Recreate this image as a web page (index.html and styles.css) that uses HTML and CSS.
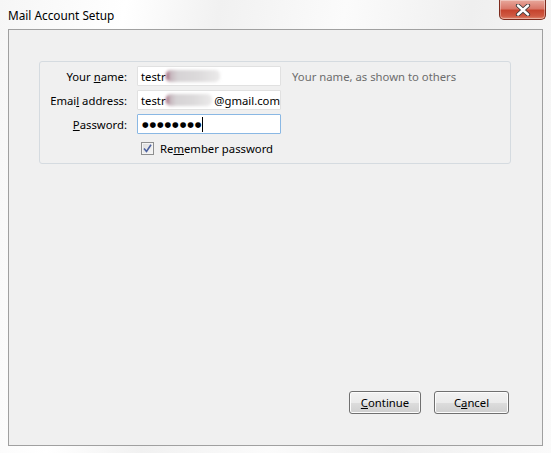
FILE: index.html
```html
<!DOCTYPE html>
<html>
<head>
<meta charset="utf-8">
<link rel="stylesheet" href="styles.css">
</head>
<body>
<div class="window">
  <div class="titlebar">
    <span class="title">Mail Account Setup</span>
    <div class="close">
      <svg width="22" height="12" viewBox="0 0 22 12">
        <path d="M6 1.5 L16 10.5 M16 1.5 L6 10.5" stroke="#3a3a3a" stroke-width="4.2" stroke-linecap="round"/>
        <path d="M6 1.5 L16 10.5 M16 1.5 L6 10.5" stroke="#ffffff" stroke-width="2.4" stroke-linecap="round"/>
      </svg>
    </div>
  </div>
  <div class="panel">
    <div class="group">
      <label class="lbl">Your <u>n</u>ame:</label>
      <div class="field"><span>testr</span><span class="blur w56"></span></div>
      <span class="hint">Your name, as shown to others</span>

      <label class="lbl">Emai<u>l</u> address:</label>
      <div class="field"><span>testr</span><span class="blur w51"></span><span>@gmail.com</span></div>
      <span></span>

      <label class="lbl"><u>P</u>assword:</label>
      <div class="field focus"><span class="dots">●●●●●●●●</span><span class="caret"></span></div>
      <span></span>

      <span></span>
      <div class="check">
        <span class="box">
          <svg width="9" height="9" viewBox="0 0 9 9"><path d="M1 4.5 L3.5 7.5 L8 0.8" fill="none" stroke="#4d62a0" stroke-width="1.6"/></svg>
        </span>
        <span>Re<u>m</u>ember password</span>
      </div>
      <span></span>
    </div>
    <div class="buttons">
      <button class="btn cont"><u>C</u>ontinue</button>
      <button class="btn canc">C<u>a</u>ncel</button>
    </div>
  </div>
</div>
</body>
</html>
```

FILE: styles.css
```css
* { box-sizing: border-box; }
html, body { margin: 0; padding: 0; }
body {
  width: 551px;
  height: 453px;
  overflow: hidden;
  font-family: "Noto Sans", "Open Sans", sans-serif;
  font-size: 11.3px;
  color: #000;
  background: linear-gradient(100deg, #f6f6f6 0%, #ffffff 20%, #f1f1f1 35%, #fbfbfb 55%, #efefef 75%, #fafafa 100%);
}
.window {
  width: 551px;
  height: 453px;
  display: flex;
  flex-direction: column;
  padding: 0 8px 7px 8px;
}
.titlebar {
  height: 29px;
  flex: none;
  display: flex;
  align-items: flex-start;
  justify-content: space-between;
  margin-right: -3px;
}
.title {
  font-size: 11.8px;
  line-height: 14px;
  padding-top: 8px;
  color: #000;
}
.close {
  width: 47px;
  height: 20px;
  border: 1px solid #7c2b1d;
  border-top: none;
  border-radius: 0 0 5px 5px;
  background: linear-gradient(#e8a89c 0%, #d9786a 45%, #c6442e 55%, #cf5a43 85%, #e08a72 100%);
  box-shadow: inset 0 0 0 1px rgba(255,255,255,0.35);
  display: flex;
  align-items: center;
  justify-content: center;
}
.panel {
  flex: 1;
  background: #f0f0f0;
  border: 1px solid #a0a0a0;
  display: flex;
  flex-direction: column;
  padding: 31px 31px 31px 30px;
}
.group {
  border: 1px solid #d5dbe0;
  border-radius: 3px;
  display: grid;
  grid-template-columns: 87px 144px auto;
  grid-auto-rows: 20px;
  column-gap: 10px;
  row-gap: 4px;
  padding: 4px 0 5px 0;
  align-items: center;
}
.lbl {
  text-align: right;
  white-space: nowrap;
}
.hint {
  color: #6d6d6d;
  margin-left: 1px;
  white-space: nowrap;
}
.field {
  height: 20px;
  background: #fff;
  border: 1px solid #e1e1e1;
  border-radius: 1px;
  padding: 0 0 0 3px;
  display: flex;
  align-items: center;
  white-space: nowrap;
  overflow: hidden;
}
.field.focus {
  border-color: #8ab8e4;
}
.blur {
  display: inline-block;
  height: 12px;
  border-radius: 5px;
  background: linear-gradient(90deg, #8e3a55 0%, #c4b4bb 7%, #d6d3d5 22%, #dcdadb 60%, #ebeaea 100%);
  filter: blur(1.8px);
  margin-left: 0;
}
.w56 { width: 54px; }
.w51 { width: 49px; margin-right: 2px; }
.dots {
  font-family: "DejaVu Sans", sans-serif;
  font-size: 7.6px;
  letter-spacing: 0.9px;
  padding-left: 1px;
}
.caret {
  display: inline-block;
  width: 1px;
  height: 15px;
  background: #000;
  margin-left: 0;
}
.check {
  display: flex;
  align-items: center;
  gap: 6px;
  padding-left: 4px;
  white-space: nowrap;
}
.box {
  width: 13px;
  height: 13px;
  border: 1px solid #8e8f8f;
  background: linear-gradient(135deg, #dcdcdc, #f7f7f7);
  display: flex;
  align-items: center;
  justify-content: center;
  box-shadow: inset 0 0 0 1px #f4f4f4;
}
.buttons {
  margin-top: auto;
  display: flex;
  justify-content: flex-end;
  gap: 13px;
  padding-right: 2px;
}
.btn {
  height: 23px;
  font-family: "Noto Sans", "Open Sans", sans-serif;
  font-size: 11.3px;
  color: #000;
  border: 1px solid #707070;
  border-radius: 3px;
  background: linear-gradient(#f2f2f2 0%, #ebebeb 50%, #dddddd 51%, #cfcfcf 100%);
  box-shadow: inset 0 0 0 1px #fcfcfc;
  padding: 0;
  line-height: 19px;
}
.cont { width: 72px; }
.canc { width: 75px; }
```
